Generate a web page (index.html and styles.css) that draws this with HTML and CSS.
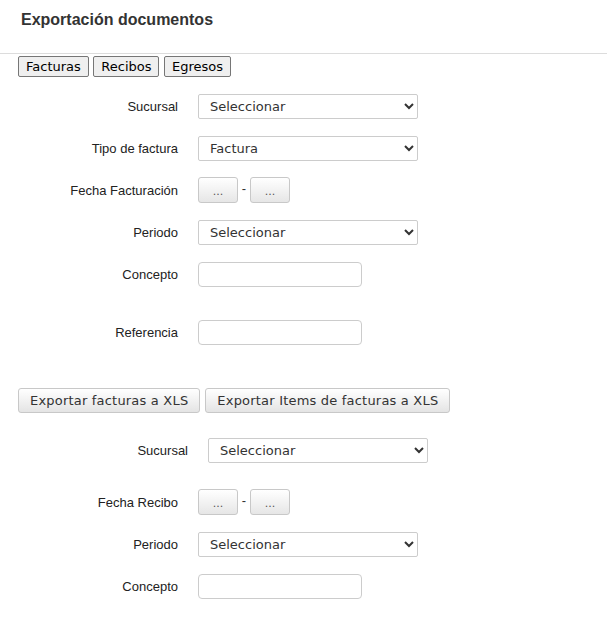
FILE: index.html
```html
<!DOCTYPE html>
<html lang="es">
<head>
<meta charset="utf-8">
<title>Exportación documentos</title>
<link rel="stylesheet" href="styles.css">
</head>
<body>
<header class="header">
  <h1 class="title">Exportación documentos</h1>
</header>
<nav class="tabs">
  <button class="tab">Facturas</button>
  <button class="tab">Recibos</button>
  <button class="tab">Egresos</button>
</nav>

<section class="form form-facturas">
  <div class="row">
    <label class="label">Sucursal</label>
    <select class="select"><option>Seleccionar</option></select>
  </div>
  <div class="row">
    <label class="label">Tipo de factura</label>
    <select class="select"><option>Factura</option></select>
  </div>
  <div class="row">
    <label class="label">Fecha Facturación</label>
    <div class="dates">
      <button class="dot-btn">...</button>
      <span class="dash">-</span>
      <button class="dot-btn">...</button>
    </div>
  </div>
  <div class="row">
    <label class="label">Periodo</label>
    <select class="select"><option>Seleccionar</option></select>
  </div>
  <div class="row">
    <label class="label">Concepto</label>
    <input class="input" type="text">
  </div>
  <div class="row row-wide">
    <label class="label">Referencia</label>
    <input class="input" type="text">
  </div>
</section>

<div class="actions">
  <button class="export-btn">Exportar facturas a XLS</button>
  <button class="export-btn">Exportar Items de facturas a XLS</button>
</div>

<section class="form form-recibos">
  <div class="row row-shift">
    <label class="label">Sucursal</label>
    <select class="select"><option>Seleccionar</option></select>
  </div>
  <div class="row row-date">
    <label class="label">Fecha Recibo</label>
    <div class="dates">
      <button class="dot-btn">...</button>
      <span class="dash">-</span>
      <button class="dot-btn">...</button>
    </div>
  </div>
  <div class="row">
    <label class="label">Periodo</label>
    <select class="select"><option>Seleccionar</option></select>
  </div>
  <div class="row">
    <label class="label">Concepto</label>
    <input class="input" type="text">
  </div>
</section>
</body>
</html>
```

FILE: styles.css
```css
html, body {
  margin: 0;
  padding: 0;
  background: #fff;
}

body {
  font-family: "Liberation Sans", Arial, sans-serif;
  color: #222;
}

.header {
  padding: 10px 21px 24px;
  border-bottom: 1px solid #dcdcdc;
}

.title {
  margin: 0;
  font-size: 16px;
  line-height: 19px;
  font-weight: bold;
  color: #333;
}

.tabs {
  padding: 2px 0 0 18px;
  height: 21px;
}

.tab {
  font-family: "DejaVu Sans", Verdana, sans-serif;
  font-size: 13px;
  height: 21px;
  padding: 0 7px;
  margin: 0;
  border: 1px solid #767676;
  border-radius: 2px;
  background: #efefef;
  color: #000;
  vertical-align: top;
}

.form-facturas {
  padding-top: 16px;
}

.row {
  display: flex;
  align-items: center;
  height: 26px;
  margin-top: 16px;
}

.row:first-child {
  margin-top: 0;
}

.row-wide {
  margin-top: 32px;
}

.label {
  width: 198px;
  padding-right: 20px;
  box-sizing: border-box;
  flex: none;
  text-align: right;
  font-size: 13px;
  color: #222;
}

.row-shift .label {
  width: 208px;
}

.row-date {
  margin-top: 26px;
}

.select {
  width: 220px;
  height: 25px;
  box-sizing: border-box;
  border: 1px solid #ccc;
  border-radius: 2px;
  background-color: #fff;
  padding: 0 0 0 7px;
  font-family: "DejaVu Sans", Verdana, sans-serif;
  font-size: 13px;
  color: #333;
}

.input {
  width: 164px;
  height: 25px;
  box-sizing: border-box;
  border: 1px solid #ccc;
  border-radius: 4px;
  background: #fff;
  margin: 0;
  padding: 0 6px;
}

.dates {
  display: flex;
  align-items: center;
}

.dot-btn {
  width: 40px;
  height: 26px;
  box-sizing: border-box;
  margin: 0;
  padding: 3px 0 0;
  border: 1px solid #c8c8c8;
  border-radius: 3px;
  background: linear-gradient(#ffffff, #e6e6e6);
  font-family: "DejaVu Sans", Verdana, sans-serif;
  font-size: 11px;
  color: #555;
}

.dash {
  width: 12px;
  text-align: center;
  font-size: 13px;
  color: #333;
  padding-bottom: 4px;
}

.actions {
  display: flex;
  gap: 5px;
  padding-left: 18px;
  margin-top: 43px;
}

.export-btn {
  height: 25px;
  box-sizing: border-box;
  margin: 0;
  padding: 0 11px;
  border: 1px solid #c8c8c8;
  border-radius: 3px;
  background: linear-gradient(#ffffff, #e4e4e4);
  font-family: "DejaVu Sans", Verdana, sans-serif;
  font-size: 13px;
  letter-spacing: 0.2px;
  color: #333;
}

.form-recibos {
  padding-top: 24px;
}
```
